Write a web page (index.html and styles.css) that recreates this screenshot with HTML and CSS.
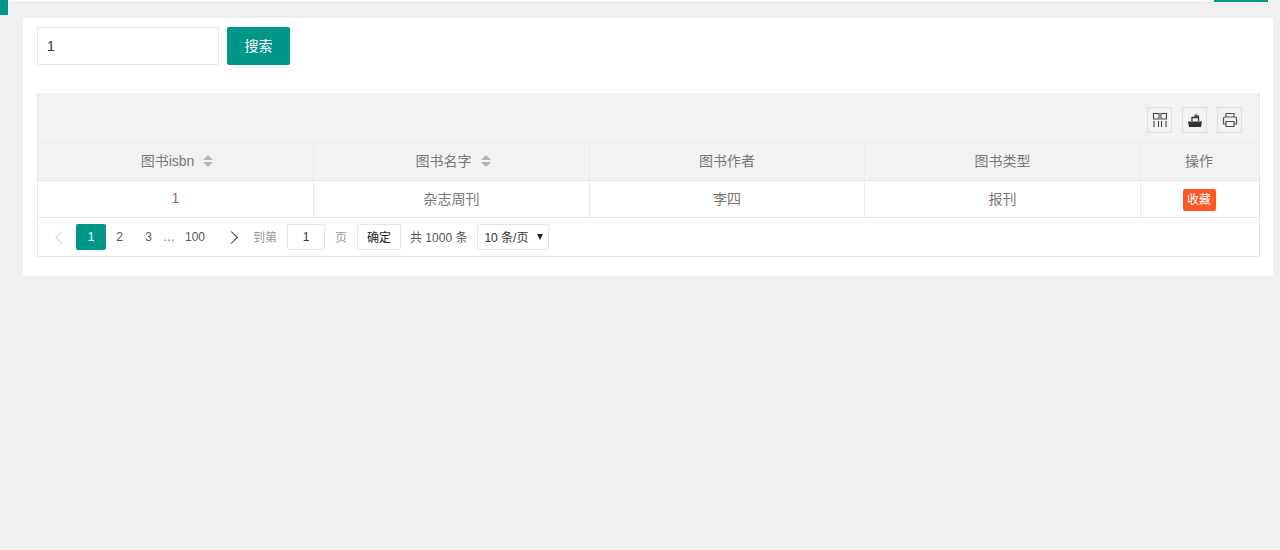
FILE: index.html
```html
<!DOCTYPE html>
<html lang="zh-CN">
<head>
<meta charset="utf-8">
<title>图书列表</title>
<link rel="stylesheet" href="styles.css">
</head>
<body>
<div class="topbar">
  <span class="tab-mark"></span>
  <span class="top-line"></span>
  <span class="top-active"></span>
</div>
<main class="card">
  <form class="search">
    <input class="search-input" value="1">
    <button type="button" class="search-btn">搜索</button>
  </form>
  <section class="table-box">
    <div class="toolbar">
      <span class="tool"><svg viewBox="0 0 16 16" width="16" height="16"><path d="M1.500 1.500h5.500v5.500h-5.500zM9 1.500h5.500v5.500h-5.500zM2 9v6M6.500 9v6M9.500 9v6M14 9v6" fill="none" stroke="#444" stroke-width="1.100"/></svg></span>
      <span class="tool"><svg viewBox="0 0 16 16" width="16" height="16"><path d="M1 9.500h14l-1 5.500h-12z" fill="#333"/><path d="M5 9V5.500h6.500V9" fill="none" stroke="#333" stroke-width="1.300"/><path d="M6.500 4.500 9.500 1.500v2h2.500v1.500" fill="#333"/></svg></span>
      <span class="tool"><svg viewBox="0 0 16 16" width="16" height="16"><path d="M4 5V1.500h8V5M4 12H1.500V6.500a1.500 1.500 0 0 1 1.500-1.500h10a1.500 1.500 0 0 1 1.500 1.500V12H12M4 9.500h8v5h-8z" fill="none" stroke="#555" stroke-width="1.200"/></svg></span>
    </div>
    <div class="row head">
      <div class="cell">图书isbn<span class="sort"><i class="up"></i><i class="down"></i></span></div>
      <div class="cell">图书名字<span class="sort"><i class="up"></i><i class="down"></i></span></div>
      <div class="cell">图书作者</div>
      <div class="cell">图书类型</div>
      <div class="cell last">操作</div>
    </div>
    <div class="row body-row">
      <div class="cell">1</div>
      <div class="cell">杂志周刊</div>
      <div class="cell">李四</div>
      <div class="cell">报刊</div>
      <div class="cell last action"><span class="fav">收藏</span></div>
    </div>
    <div class="pager">
      <span class="chev disabled"></span>
      <span class="page current">1</span>
      <span class="page second">2</span>
      <span class="page">3</span>
      <span class="dots">…</span>
      <span class="page wide">100</span>
      <span class="chev next"></span>
      <span class="muted goto">到第</span>
      <input class="page-input" value="1">
      <span class="muted unit">页</span>
      <span class="confirm">确定</span>
      <span class="total">共 1000 条</span>
      <span class="size-wrap"><select class="size"><option>10 条/页</option></select></span>
    </div>
  </section>
</main>
</body>
</html>
```
FILE: styles.css
```css
* { box-sizing: border-box; }
html, body { margin: 0; height: 100%; }
body {
  background: #f0f0f0;
  font-family: "Liberation Sans", "Noto Sans CJK SC", sans-serif;
  font-size: 14px;
  color: #777;
  overflow: hidden;
}
.topbar {
  position: relative;
  display: flex;
  height: 3px;
  padding-left: 8px;
}
.tab-mark {
  position: absolute;
  left: 0;
  top: 0;
  width: 8px;
  height: 15px;
  background: #009688;
}
.top-line {
  width: 1202px;
  height: 3px;
  background: #fff;
  border-bottom: 1px solid #e6e6e6;
}
.top-active {
  width: 54px;
  height: 2px;
  margin-left: 4px;
  background: #009688;
}
.card {
  width: 1250px;
  height: 258px;
  margin: 15px 0 0 23px;
  padding: 9px 14px 0;
  background: #fff;
  border-radius: 2px;
}
.search {
  display: flex;
  gap: 8px;
  height: 38px;
}
.search-input {
  width: 182px;
  height: 38px;
  padding: 0 9px;
  border: 1px solid #e6e6e6;
  border-radius: 2px;
  font: inherit;
  color: #333;
  outline: 0;
}
.search-btn {
  width: 63px;
  height: 38px;
  padding: 0 0 3px;
  border: 0;
  border-radius: 2px;
  background: #009688;
  color: #fff;
  font: inherit;
}
.table-box {
  width: 1223px;
  margin-top: 28px;
  border: 1px solid #e6e6e6;
  border-top: 0;
}
.toolbar {
  display: flex;
  justify-content: flex-end;
  gap: 10px;
  height: 50px;
  padding: 14px 17px 0 0;
  background: #f2f2f2;
  border-bottom: 1px solid #ebebeb;
}
.tool {
  display: flex;
  align-items: center;
  justify-content: center;
  width: 25px;
  height: 26px;
  border: 1px solid #ddd;
}
.row {
  display: grid;
  grid-template-columns: 276px 276px 275px 276px 1fr;
  text-align: center;
}
.head {
  height: 38px;
  background: #f2f2f2;
  border-bottom: 1px solid #e6e6e6;
}
.body-row {
  height: 37px;
  border-bottom: 1px solid #e6e6e6;
}
.cell {
  display: flex;
  align-items: center;
  justify-content: center;
  padding-bottom: 3px;
  border-right: 1px solid #ebebeb;
}
.cell.last { padding-right: 2px; border-right: 0; }
.cell.action { padding-top: 2px; padding-bottom: 0; }
.sort {
  display: inline-flex;
  flex-direction: column;
  gap: 2px;
  margin: 2px -3px 0 9px;
}
.sort i {
  width: 0;
  height: 0;
  border-left: 5px solid transparent;
  border-right: 5px solid transparent;
}
.up { border-bottom: 5px solid #b2b2b2; }
.down { border-top: 5px solid #b2b2b2; }
.fav {
  width: 33px;
  height: 22px;
  line-height: 22px;
  background: #ff5722;
  color: #fff;
  font-size: 12px;
  border-radius: 2px;
}
.pager {
  display: flex;
  align-items: center;
  height: 38px;
  padding-left: 14px;
  font-size: 12px;
  color: #555;
}
.chev {
  width: 9px;
  height: 9px;
  border-left: 1.500px solid #d2d2d2;
  border-bottom: 1.500px solid #d2d2d2;
  transform: rotate(45deg);
}
.chev.disabled { margin: 0 10px 0 5px; }
.chev.next {
  margin-left: 14px;
  border-color: #333;
  transform: rotate(225deg);
}
.page {
  width: 29px;
  height: 26px;
  line-height: 26px;
  text-align: center;
  border-radius: 2px;
}
.current {
  width: 30px;
  background: #009688;
  color: #fff;
}
.second { margin-left: -1px; }
.dots { width: 11px; color: #777; text-align: center; }
.wide { width: 36px; margin-left: 3px; }
.muted { color: #999; padding-bottom: 2px; }
.goto { margin-left: 17px; }
.page-input {
  width: 38px;
  height: 26px;
  margin-left: 10px;
  border: 1px solid #e6e6e6;
  border-radius: 2px;
  text-align: center;
  font: inherit;
  color: #333;
  padding: 0;
}
.unit { margin-left: 10px; }
.confirm {
  width: 44px;
  height: 26px;
  margin-left: 10px;
  line-height: 26px;
  text-align: center;
  border: 1px solid #e6e6e6;
  border-radius: 2px;
  color: #222;
}
.total { margin-left: 9px; padding-bottom: 2px; color: #555; }
.size-wrap {
  position: relative;
  margin-left: 10px;
}
.size-wrap::after {
  content: "";
  position: absolute;
  right: 6px;
  top: 10px;
  border-left: 3.500px solid transparent;
  border-right: 3.500px solid transparent;
  border-top: 6px solid #222;
}
.size {
  display: block;
  appearance: none;
  width: 72px;
  height: 26px;
  padding: 2px 0 0 6px;
  border: 1px solid #e6e6e6;
  border-radius: 2px;
  background: #fff;
  font: inherit;
  color: #333;
}
```
